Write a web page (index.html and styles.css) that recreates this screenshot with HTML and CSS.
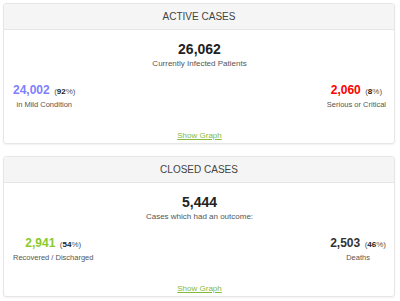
FILE: index.html
```html
<!DOCTYPE html>
<html lang="en">
<head>
    <meta charset="UTF-8">
    <meta name="viewport" content="width=device-width, initial-scale=1.0">
    <title>Cases</title>
    <link rel="stylesheet" href="styles.css">
</head>
<body>
    <div class="panel">
        <div class="panel-heading">Active Cases</div>
        <div class="panel-body">
            <div class="total">26,062</div>
            <div class="caption">Currently Infected Patients</div>
            <div class="split">
                <div class="part">
                    <div><span class="number mild">24,002</span> <span class="pct">(<strong>92</strong>%)</span></div>
                    <div class="caption small">in Mild Condition</div>
                </div>
                <div class="part">
                    <div><span class="number serious">2,060</span> <span class="pct">(<strong>8</strong>%)</span></div>
                    <div class="caption small">Serious or Critical</div>
                </div>
            </div>
            <a class="graph-link" href="#">Show Graph</a>
        </div>
    </div>

    <div class="panel">
        <div class="panel-heading">Closed Cases</div>
        <div class="panel-body">
            <div class="total">5,444</div>
            <div class="caption">Cases which had an outcome:</div>
            <div class="split">
                <div class="part">
                    <div><span class="number recovered">2,941</span> <span class="pct">(<strong>54</strong>%)</span></div>
                    <div class="caption small">Recovered / Discharged</div>
                </div>
                <div class="part">
                    <div><span class="number deaths">2,503</span> <span class="pct">(<strong>46</strong>%)</span></div>
                    <div class="caption small">Deaths</div>
                </div>
            </div>
            <a class="graph-link" href="#">Show Graph</a>
        </div>
    </div>
</body>
</html>
```

FILE: styles.css
```css
body {
    font-family: 'Liberation Sans', Arial, sans-serif;
    margin: 0;
    padding: 3px 5px 3px 3px;
    background: #fff;
    color: #333;
}
.panel {
    border: 1px solid #e6e6e6;
    border-radius: 3px;
    box-shadow: 0 1px 2px rgba(0, 0, 0, 0.06);
    margin-bottom: 12px;
    height: 139px;
    display: flex;
    flex-direction: column;
}
.panel-heading {
    height: 25px;
    line-height: 25px;
    background-color: #f5f5f5;
    border-bottom: 1px solid #e6e6e6;
    text-align: center;
    font-size: 10px;
    text-transform: uppercase;
    color: #444;
}
.panel-body {
    flex: 1;
    display: flex;
    flex-direction: column;
    align-items: center;
    padding: 11px 8px 0 9px;
    text-align: center;
}
.total {
    font-size: 14px;
    font-weight: bold;
    line-height: 17px;
    color: #222;
}
.caption {
    font-size: 8px;
    line-height: 10px;
    color: #555;
    margin-top: 1px;
}
.caption.small {
    font-size: 7.5px;
}
.split {
    align-self: stretch;
    display: flex;
    justify-content: space-between;
    margin-top: 13px;
}
.part {
    text-align: center;
    line-height: 14px;
}
.number {
    font-size: 12px;
    font-weight: bold;
}
.mild {
    color: #8080ff;
}
.serious {
    color: #ff0000;
}
.recovered {
    color: #8aca2b;
}
.deaths {
    color: #333;
}
.pct {
    font-size: 8px;
    color: #555;
}
.pct strong {
    color: #222;
}
.graph-link {
    margin-top: 21px;
    font-size: 8px;
    line-height: 10px;
    color: #85b940;
}
```
